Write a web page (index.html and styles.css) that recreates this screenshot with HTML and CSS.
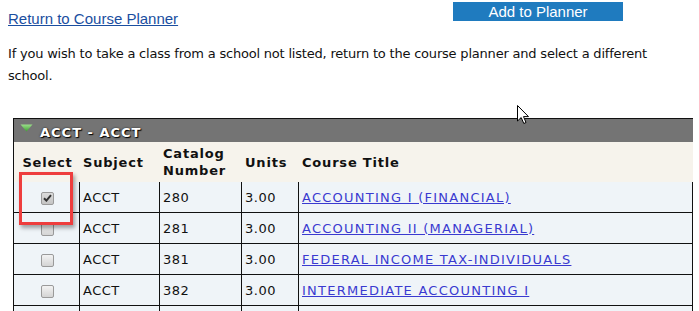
FILE: index.html
```html
<!DOCTYPE html>
<html>
<head>
<meta charset="utf-8">
<link rel="stylesheet" href="styles.css">
</head>
<body>
<div class="page">
  <div class="top">
    <a class="back" href="#">Return to Course Planner</a>
    <button class="add">Add to Planner</button>
  </div>
  <p class="note">If you wish to take a class from a school not listed, return to the course planner and select a different school.</p>
  <div class="grid-wrap">
    <table class="courses">
      <colgroup>
        <col class="c-sel"><col class="c-sub"><col class="c-cat"><col class="c-unit"><col class="c-title">
      </colgroup>
      <tr class="bar">
        <td colspan="5"><span class="bar-in"><svg class="tri" width="13" height="8" viewBox="0 0 13 8"><defs><linearGradient id="g" x1="0" y1="0" x2="0" y2="1"><stop offset="0" stop-color="#9be08a"/><stop offset="1" stop-color="#3f9e34"/></linearGradient></defs><polygon points="0.5,0.5 12.5,0.5 6.5,7.5" fill="url(#g)"/></svg><span class="bar-title">ACCT - ACCT</span></span></td>
      </tr>
      <tr class="head">
        <th class="h-sel">Select</th>
        <th>Subject</th>
        <th>Catalog<br>Number</th>
        <th>Units</th>
        <th>Course Title</th>
      </tr>
      <tr class="row">
        <td class="sel"><span class="cb on"><svg width="9" height="8" viewBox="0 0 9 8"><path d="M1 4.2 L3.4 6.6 L8 1.2" fill="none" stroke="#333" stroke-width="2"/></svg></span></td>
        <td>ACCT</td><td>280</td><td>3.00</td>
        <td><a href="#">ACCOUNTING I (FINANCIAL)</a></td>
      </tr>
      <tr class="row">
        <td class="sel"><span class="cb"></span></td>
        <td>ACCT</td><td>281</td><td>3.00</td>
        <td><a href="#">ACCOUNTING II (MANAGERIAL)</a></td>
      </tr>
      <tr class="row">
        <td class="sel"><span class="cb"></span></td>
        <td>ACCT</td><td>381</td><td>3.00</td>
        <td><a href="#">FEDERAL INCOME TAX-INDIVIDUALS</a></td>
      </tr>
      <tr class="row">
        <td class="sel"><span class="cb"></span></td>
        <td>ACCT</td><td>382</td><td>3.00</td>
        <td><a href="#">INTERMEDIATE ACCOUNTING I</a></td>
      </tr>
      <tr class="row">
        <td class="sel"></td>
        <td></td><td></td><td></td>
        <td></td>
      </tr>
    </table>
    <div class="mark"></div>
  </div>
  <svg class="cursor" width="13" height="20" viewBox="0 0 13 20"><path d="M0.5 0.5 L0.5 16 L4.2 12.5 L6.8 18.5 L9 17.5 L6.5 11.6 L11.5 11.6 Z" fill="#fff" stroke="#000" stroke-width="1" stroke-linejoin="miter"/></svg>
</div>
</body>
</html>
```

FILE: styles.css
```css
html, body {
  margin: 0;
  padding: 0;
  overflow: hidden;
  background: #fff;
}
.page {
  position: relative;
  padding: 0 0 0 8px;
  font-family: "DejaVu Sans", Verdana, sans-serif;
  font-size: 13px;
  color: #111;
}
.top {
  display: grid;
  grid-template-columns: 445px 170px;
  align-items: start;
  height: 30px;
}
.back {
  margin-top: 10px;
  font-family: "Liberation Sans", Arial, sans-serif;
  font-size: 15px;
  line-height: 17px;
  color: #1a4ea0;
  text-decoration: underline;
}
.add {
  margin-top: 2px;
  width: 170px;
  height: 19px;
  padding: 0;
  border: 0;
  background: #1f7bbf;
  color: #fff;
  font-family: "Liberation Sans", Arial, sans-serif;
  font-size: 15px;
  line-height: 19px;
}
.note {
  margin: 13px 0 0 0;
  line-height: 22px;
  padding-right: 8px;
  letter-spacing: -0.2px;
}
.grid-wrap {
  position: relative;
  margin: 31px 0 0 5px;
}
.courses {
  border-collapse: separate;
  border-spacing: 0;
  table-layout: fixed;
  width: 680px;
  border-left: 1px solid #111;
  border-top: 1px solid #111;
}
.c-sel { width: 66px; }
.c-sub { width: 80px; }
.c-cat { width: 82px; }
.c-unit { width: 57px; }
.c-title { width: 394px; }
.bar td {
  background: #747474;
  height: 23px;
  padding: 0;
}
.bar-in {
  display: flex;
  align-items: center;
  padding-left: 6px;
}
.tri {
  display: block;
  margin-top: -5px;
}
.bar-title {
  margin-left: 7px;
  margin-top: 3px;
  color: #fff;
  font-weight: bold;
  letter-spacing: 1px;
  text-shadow: 1px 1px 1px #000, 0 0 2px #222;
}
.head th {
  background: #f6f3ec;
  height: 40px;
  padding: 0 0 0 3px;
  text-align: left;
  vertical-align: middle;
  font-weight: bold;
  letter-spacing: 0.8px;
  line-height: 17px;
}
.head th.h-sel {
  text-align: center;
  padding: 0 0 0 1px;
}
.row td {
  background: #eff4f8;
  height: 30px;
  padding: 0 0 0 3px;
  border-right: 1px solid #111;
  border-bottom: 1px solid #111;
  letter-spacing: 0.5px;
  white-space: nowrap;
}
.row td.sel {
  text-align: center;
  padding: 0 0 0 1px;
}
.row td a {
  color: #3a3ad0;
  letter-spacing: 1.25px;
}
.cb {
  display: inline-flex;
  align-items: center;
  justify-content: center;
  width: 11px;
  height: 11px;
  border: 1px solid #9a9a9a;
  border-radius: 2px;
  background: linear-gradient(#f3f3f3, #d4d4d4);
  vertical-align: middle;
}
.cb.on {
  background: linear-gradient(#dcdcdc, #c4c4c4);
}
.cb svg {
  display: block;
}
.mark {
  position: absolute;
  left: 6px;
  top: 54px;
  width: 48px;
  height: 47px;
  border: 3px solid #ee3d3d;
  box-shadow: 2px 3px 4px rgba(0, 0, 0, 0.35);
}
.cursor {
  position: absolute;
  left: 517px;
  top: 105px;
}
```
